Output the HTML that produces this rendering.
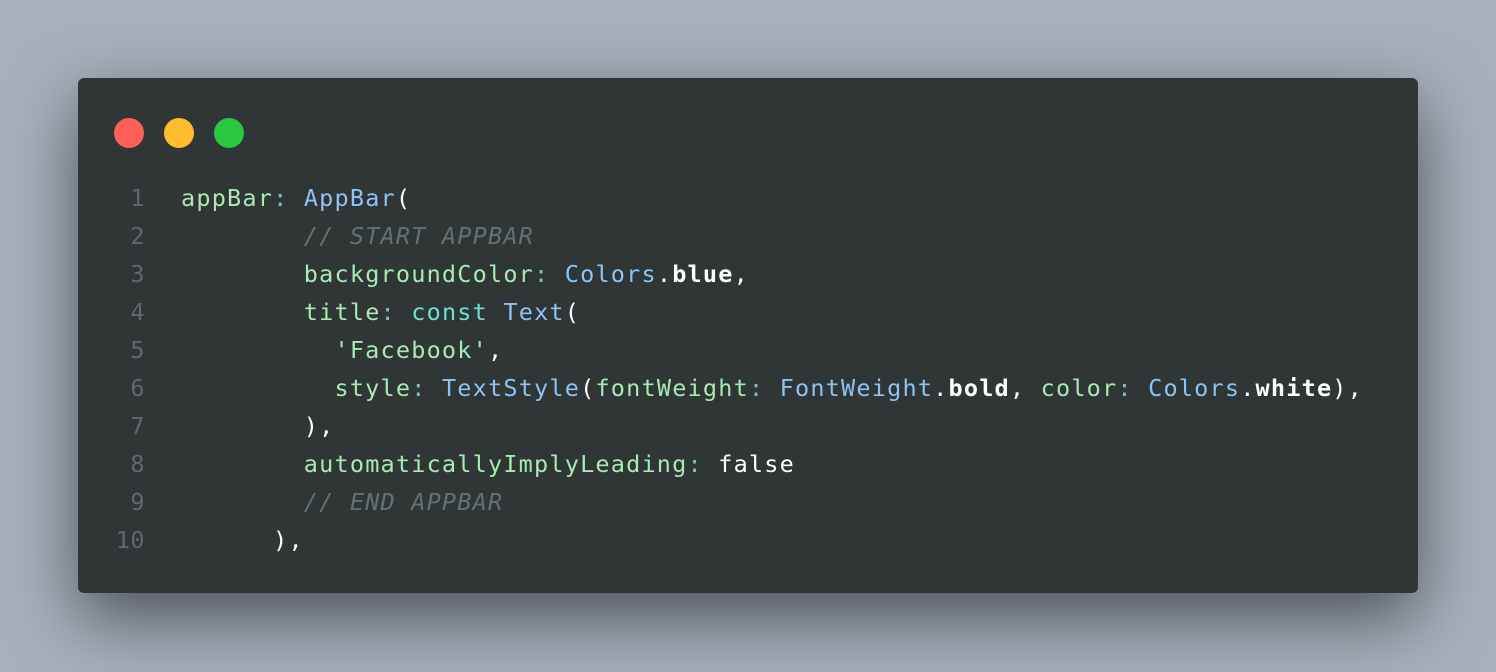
<!DOCTYPE html>
<html><head><style>
html,body{margin:0;padding:0;width:1496px;height:672px;overflow:hidden;background:#a7b1bc;}
.card{position:absolute;left:78px;top:78px;width:1340px;height:515px;background:#303536;border-radius:6px;box-shadow:0 25px 70px rgba(0,0,0,0.55);}
.dot{position:absolute;top:40px;width:30px;height:30px;border-radius:50%;}
pre{position:absolute;left:0;top:101px;margin:0;font-family:"DejaVu Sans Mono","Liberation Mono",monospace;font-size:23.5px;letter-spacing:1.2px;line-height:38px;color:#f2f2f2;}
.ln{display:inline-block;width:67px;text-align:right;color:#5f6872;margin-right:36px;letter-spacing:0.5px;}
.k{color:#a9e9b4}.p{color:#7fbfb4}.b{color:#8cc3f3}.c{color:#5f7373;font-style:italic}.t{color:#6ee0d2}.w{color:#fff;font-weight:bold}.f{color:#fff}
</style></head><body>
<div class="card">
<div class="dot" style="left:36px;background:#fe5f57"></div>
<div class="dot" style="left:86px;background:#febc2e"></div>
<div class="dot" style="left:136px;background:#28c840"></div>
<pre><span class="ln">1</span><span class="k">appBar</span><span class="p">:</span> <span class="b">AppBar</span><span class="f">(</span>
<span class="ln">2</span>        <span class="c">// START APPBAR</span>
<span class="ln">3</span>        <span class="k">backgroundColor</span><span class="p">:</span> <span class="b">Colors</span><span class="f">.</span><span class="w">blue</span><span class="f">,</span>
<span class="ln">4</span>        <span class="k">title</span><span class="p">:</span> <span class="t">const</span> <span class="b">Text</span><span class="f">(</span>
<span class="ln">5</span>          <span class="k">'Facebook'</span><span class="f">,</span>
<span class="ln">6</span>          <span class="k">style</span><span class="p">:</span> <span class="b">TextStyle</span><span class="f">(</span><span class="k">fontWeight</span><span class="p">:</span> <span class="b">FontWeight</span><span class="f">.</span><span class="w">bold</span><span class="f">,</span> <span class="k">color</span><span class="p">:</span> <span class="b">Colors</span><span class="f">.</span><span class="w">white</span><span class="f">),</span>
<span class="ln">7</span>        <span class="f">),</span>
<span class="ln">8</span>        <span class="k">automaticallyImplyLeading</span><span class="p">:</span> <span class="f">false</span>
<span class="ln">9</span>        <span class="c">// END APPBAR</span>
<span class="ln">10</span>      <span class="f">),</span></pre>
</div>
</body></html>
